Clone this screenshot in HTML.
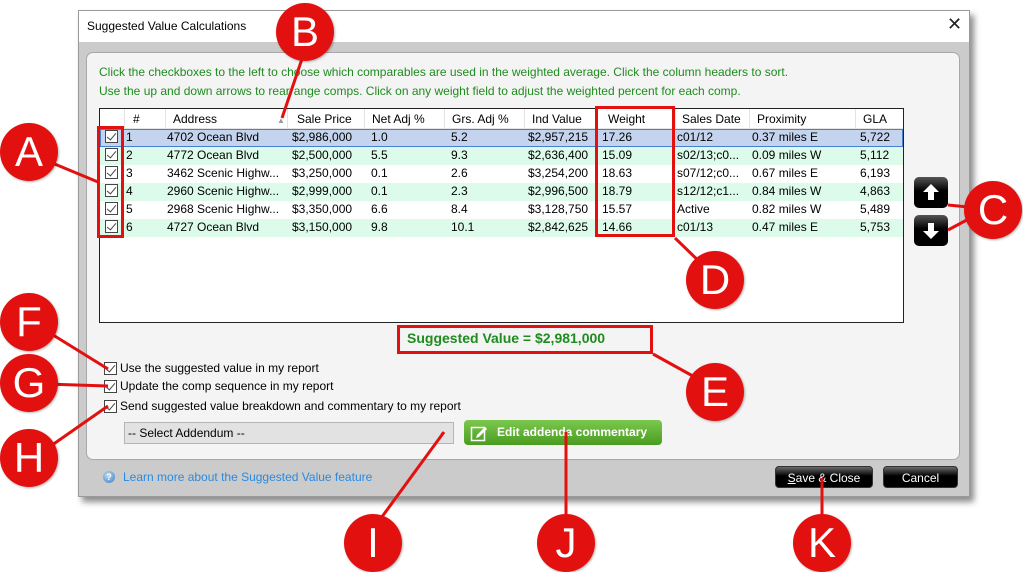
<!DOCTYPE html>
<html><head><meta charset="utf-8"><style>
*{margin:0;padding:0;box-sizing:border-box}
body{width:1023px;height:571px;background:#fff;position:relative;overflow:hidden;font-family:"Liberation Sans","DejaVu Sans",sans-serif;font-size:12px;color:#000}
.a{position:absolute}
.win{left:78px;top:10px;width:892px;height:487px;background:#cbcbcb;border:1px solid #9a9a9a;box-shadow:4px 5px 6px rgba(0,0,0,.45)}
.title{left:0;top:0;width:890px;height:31px;background:#fff}
.panel{left:7px;top:41px;width:874px;height:408px;background:#f4f4f4;border:1px solid #a8a8a8;border-radius:7px}
.g{color:#1e8c1e;font-size:12px}
.tbl{left:99px;top:108px;width:805px;height:215px;background:#fff;border:1px solid #222}
.row{position:absolute;left:0;width:803px;height:18px;font-size:12px;line-height:18px}
.row span,.hd span{position:absolute;white-space:nowrap}
.hd{position:absolute;left:0;top:0;width:803px;height:20px;line-height:20px;border-bottom:1px solid #e4e4e4}
.sep{position:absolute;top:0;width:1px;height:20px;background:#e4e4e4}
.cb{position:absolute;width:13px;height:13px;border:1px solid #444;background:#fff}
.cb::after{content:"";position:absolute;left:3px;top:0px;width:4px;height:8px;border-right:1.5px solid #444;border-bottom:1.5px solid #444;transform:rotate(40deg)}
.circ{position:absolute;width:58px;height:58px;border-radius:50%;background:#e31010;color:#fff;font-size:42px;line-height:58px;text-align:center;font-family:"Liberation Sans",sans-serif;box-shadow:1px 1px 2px rgba(0,0,0,.3)}
.btn{position:absolute;height:22px;border-radius:4px;background:linear-gradient(#6a6a6a,#000 45%,#000);color:#fff;text-align:center;line-height:22px;font-size:12px;border:1px solid #333}
.arrowbtn{position:absolute;width:34px;height:31px;border-radius:5px;background:linear-gradient(#555,#000 45%,#000)}
</style></head><body>
<svg class="a" style="left:0;top:0" width="1023" height="571">
</svg>
<div class="a win">
 <div class="a title"><div class="a" style="left:8px;top:8px;font-size:12px">Suggested Value Calculations</div><div class="a" style="left:868px;top:3px;font-size:18px;color:#222">✕</div></div>
 <div class="a panel"></div>
</div>
<div class="a g" style="left:99px;top:65px">Click the checkboxes to the left to choose which comparables are used in the weighted average. Click the column headers to sort.</div>
<div class="a g" style="left:99px;top:84px">Use the up and down arrows to rearrange comps. Click on any weight field to adjust the weighted percent for each comp.</div>
<div class="a tbl">
 <div class="hd">
  <div class="sep" style="left:24px"></div><div class="sep" style="left:65px"></div><div class="sep" style="left:187px"></div><div class="sep" style="left:264px"></div><div class="sep" style="left:344px"></div><div class="sep" style="left:424px"></div><div class="sep" style="left:497px"></div><div class="sep" style="left:575px"></div><div class="sep" style="left:649px"></div><div class="sep" style="left:755px"></div>
  <span style="left:33px">#</span><span style="left:73px">Address</span><span style="left:177px;top:2px;font-size:8px;color:#999">▲</span><span style="left:197px">Sale Price</span><span style="left:272px">Net Adj %</span><span style="left:352px">Grs. Adj %</span><span style="left:432px">Ind Value</span><span style="left:508px">Weight</span><span style="left:582px">Sales Date</span><span style="left:657px">Proximity</span><span style="left:763px">GLA</span>
 </div>
 <div class="row" style="top:20px;background:#c4d3ee;border:1px solid #4a7fd0"></div>
 <div class="row" style="top:38px;background:#dcfbeb"></div>
 <div class="row" style="top:74px;background:#dcfbeb"></div>
 <div class="row" style="top:110px;background:#dcfbeb"></div>
 <div id="rows"></div>
</div>
<script></script>
<div class="a" style="left:99px;top:128px;width:805px">
 <div class="row" style="top:0"><div class="cb" style="left:6px;top:2px"></div><span style="left:27px">1</span><span style="left:68px">4702 Ocean Blvd</span><span style="left:193px">$2,986,000</span><span style="left:272px">1.0</span><span style="left:352px">5.2</span><span style="left:429px">$2,957,215</span><span style="left:503px">17.26</span><span style="left:578px">c01/12</span><span style="left:653px">0.37 miles E</span><span style="left:761px">5,722</span></div>
 <div class="row" style="top:18px"><div class="cb" style="left:6px;top:2px"></div><span style="left:27px">2</span><span style="left:68px">4772 Ocean Blvd</span><span style="left:193px">$2,500,000</span><span style="left:272px">5.5</span><span style="left:352px">9.3</span><span style="left:429px">$2,636,400</span><span style="left:503px">15.09</span><span style="left:578px">s02/13;c0...</span><span style="left:653px">0.09 miles W</span><span style="left:761px">5,112</span></div>
 <div class="row" style="top:36px"><div class="cb" style="left:6px;top:2px"></div><span style="left:27px">3</span><span style="left:68px">3462 Scenic Highw...</span><span style="left:193px">$3,250,000</span><span style="left:272px">0.1</span><span style="left:352px">2.6</span><span style="left:429px">$3,254,200</span><span style="left:503px">18.63</span><span style="left:578px">s07/12;c0...</span><span style="left:653px">0.67 miles E</span><span style="left:761px">6,193</span></div>
 <div class="row" style="top:54px"><div class="cb" style="left:6px;top:2px"></div><span style="left:27px">4</span><span style="left:68px">2960 Scenic Highw...</span><span style="left:193px">$2,999,000</span><span style="left:272px">0.1</span><span style="left:352px">2.3</span><span style="left:429px">$2,996,500</span><span style="left:503px">18.79</span><span style="left:578px">s12/12;c1...</span><span style="left:653px">0.84 miles W</span><span style="left:761px">4,863</span></div>
 <div class="row" style="top:72px"><div class="cb" style="left:6px;top:2px"></div><span style="left:27px">5</span><span style="left:68px">2968 Scenic Highw...</span><span style="left:193px">$3,350,000</span><span style="left:272px">6.6</span><span style="left:352px">8.4</span><span style="left:429px">$3,128,750</span><span style="left:503px">15.57</span><span style="left:578px">Active</span><span style="left:653px">0.82 miles W</span><span style="left:761px">5,489</span></div>
 <div class="row" style="top:90px"><div class="cb" style="left:6px;top:2px"></div><span style="left:27px">6</span><span style="left:68px">4727 Ocean Blvd</span><span style="left:193px">$3,150,000</span><span style="left:272px">9.8</span><span style="left:352px">10.1</span><span style="left:429px">$2,842,625</span><span style="left:503px">14.66</span><span style="left:578px">c01/13</span><span style="left:653px">0.47 miles E</span><span style="left:761px">5,753</span></div>
</div>
<!-- red boxes -->
<div class="a" style="left:97px;top:126px;width:27px;height:112px;border:3px solid #e31010"></div>
<div class="a" style="left:595px;top:106px;width:80px;height:131px;border:3px solid #e31010"></div>
<div class="a" style="left:397px;top:325px;width:256px;height:29px;border:3px solid #e31010"></div>
<div class="a" style="left:407px;top:330px;font-size:14px;font-weight:bold;color:#1e8c1e">Suggested Value = $2,981,000</div>
<!-- arrow buttons -->
<div class="arrowbtn" style="left:914px;top:177px"><svg width="34" height="31"><path d="M17 7 L25 15 L20 15 L20 23 L14 23 L14 15 L9 15Z" fill="#fff"/></svg></div>
<div class="arrowbtn" style="left:914px;top:215px"><svg width="34" height="31"><path d="M17 24 L25 16 L20 16 L20 8 L14 8 L14 16 L9 16Z" fill="#fff"/></svg></div>
<!-- options -->
<div class="cb" style="left:104px;top:362px"></div><div class="a" style="left:120px;top:361px">Use the suggested value in my report</div>
<div class="cb" style="left:104px;top:380px"></div><div class="a" style="left:120px;top:379px">Update the comp sequence in my report</div>
<div class="cb" style="left:104px;top:400px"></div><div class="a" style="left:120px;top:399px">Send suggested value breakdown and commentary to my report</div>
<div class="a" style="left:124px;top:422px;width:330px;height:22px;background:#e2e2e2;border:1px solid #b5b5b5;line-height:20px;padding-left:3px">-- Select Addendum --<span style="position:absolute;right:6px;top:0;color:#666;font-size:10px">⌄</span></div>
<div class="a" style="left:464px;top:420px;width:198px;height:25px;border-radius:4px;background:linear-gradient(#7cc84f,#4a9c20);color:#fff;font-weight:bold;line-height:25px;padding-left:33px">Edit addenda commentary
 <svg style="position:absolute;left:6px;top:4px" width="18" height="18"><rect x="1.5" y="3.5" width="13" height="13" fill="none" stroke="#fff" stroke-width="1.5"/><path d="M7 11 L15 3 L17 5 L9 13 L6 14Z" fill="#fff"/></svg></div>
<div class="a" style="left:103px;top:471px;width:12px;height:12px;border-radius:50%;background:radial-gradient(circle at 40% 35%,#bde,#3a78c8);color:#fff;font-size:9px;line-height:12px;text-align:center;font-weight:bold">?</div>
<div class="a" style="left:123px;top:470px;color:#2a8ae0">Learn more about the Suggested Value feature</div>
<div class="btn" style="left:775px;top:466px;width:98px"><u>S</u>ave &amp; Close</div>
<div class="btn" style="left:883px;top:466px;width:75px">Cancel</div>
<!-- leader lines -->
<svg class="a" style="left:0;top:0" width="1023" height="571">
<g stroke="#e31010" stroke-width="3" fill="none">
<line x1="45" y1="160" x2="98" y2="182"/>
<line x1="305" y1="50" x2="282" y2="118"/>
<line x1="948" y1="205" x2="978" y2="208"/>
<line x1="948" y1="230" x2="978" y2="214"/>
<line x1="675" y1="238" x2="708" y2="270"/>
<line x1="653" y1="354" x2="700" y2="380"/>
<line x1="45" y1="330" x2="108" y2="369"/>
<line x1="45" y1="384" x2="108" y2="386"/>
<line x1="45" y1="450" x2="108" y2="406"/>
<line x1="376" y1="525" x2="444" y2="432"/>
<line x1="566" y1="525" x2="566" y2="432"/>
<line x1="822" y1="525" x2="822" y2="478"/>
</g></svg>
<div class="circ" style="left:0px;top:123px">A</div>
<div class="circ" style="left:276px;top:3px">B</div>
<div class="circ" style="left:964px;top:181px">C</div>
<div class="circ" style="left:686px;top:251px">D</div>
<div class="circ" style="left:686px;top:363px">E</div>
<div class="circ" style="left:0px;top:293px">F</div>
<div class="circ" style="left:0px;top:354px">G</div>
<div class="circ" style="left:0px;top:429px">H</div>
<div class="circ" style="left:344px;top:514px">I</div>
<div class="circ" style="left:537px;top:514px">J</div>
<div class="circ" style="left:793px;top:514px">K</div>
</body></html>
